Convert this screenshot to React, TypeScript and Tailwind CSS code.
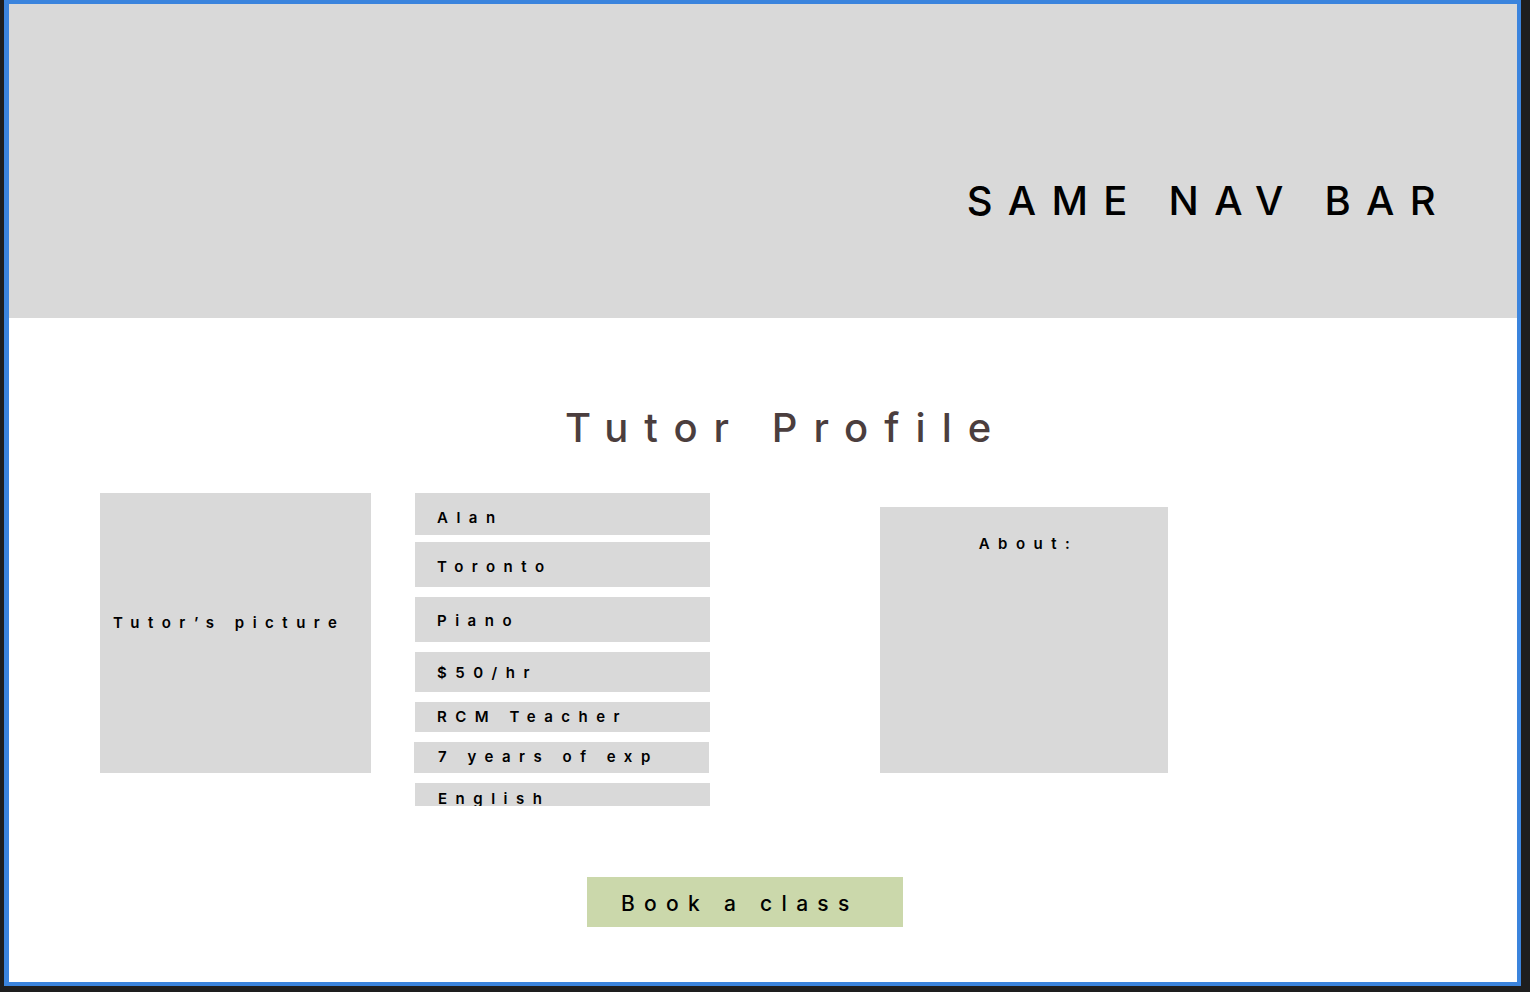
import React from "react";

const font = { fontFamily: "Inter, 'Noto Sans', sans-serif" };

function InfoBox({ text, h, pt, pl = "pl-[22px]", ml = "ml-0", mt }: { text: string; h: string; pt: string; pl?: string; ml?: string; mt: string }) {
  return (
    <div className={`w-[295px] ${h} ${mt} ${ml} bg-[#d9d9d9] ${pt} ${pl} overflow-hidden`}>
      <div className="text-[15px] leading-none font-semibold tracking-[8.5px] text-black whitespace-nowrap">{text}</div>
    </div>
  );
}

export default function App() {
  return (
    <div className="w-[1530px] h-[992px] bg-[#1e1e1e] pl-[4px] pr-[9px] pb-[6px]" style={font}>
      <div className="h-full border-l-[5px] border-t-4 border-r-4 border-b-4 border-[#3b84dd] bg-white flex flex-col">
        <div className="h-[314px] bg-[#d9d9d9] flex justify-end pt-[177px] pr-[66px]">
          <div className="text-[40px] leading-none font-medium tracking-[15.3px] text-black whitespace-nowrap">SAME NAV BAR</div>
        </div>
        <div className="mt-[90px] pl-[556px]">
          <div className="text-[40px] leading-none font-medium tracking-[16px] text-[#4b3e3e] whitespace-nowrap">Tutor Profile</div>
        </div>
        <div className="mt-[45px] flex items-start pl-[91px]">
          <div className="w-[271px] h-[280px] bg-[#d9d9d9] pt-[122px] pl-[13px]">
            <div className="text-[15px] leading-none font-semibold tracking-[8.5px] text-black whitespace-nowrap">Tutor’s picture</div>
          </div>
          <div className="ml-[44px] flex flex-col">
            <InfoBox text="Alan" h="h-[42px]" pt="pt-[17px]" mt="mt-0" />
            <InfoBox text="Toronto" h="h-[45px]" pt="pt-[17px]" mt="mt-[7px]" />
            <InfoBox text="Piano" h="h-[45px]" pt="pt-[16px]" mt="mt-[10px]" />
            <InfoBox text="$50/hr" h="h-[40px]" pt="pt-[13px]" mt="mt-[10px]" />
            <InfoBox text="RCM Teacher" h="h-[30px]" pt="pt-[7px]" mt="mt-[10px]" />
            <InfoBox text="7 years of exp" h="h-[31px]" pt="pt-[7px]" pl="pl-[24px]" ml="-ml-px" mt="mt-[10px]" />
            <InfoBox text="English" h="h-[23px]" pt="pt-[8px]" pl="pl-[23px]" mt="mt-[10px]" />
          </div>
          <div className="ml-[170px] mt-[14px] w-[288px] h-[266px] bg-[#d9d9d9] pt-[29px] pl-[9px] text-center">
            <div className="text-[15px] leading-none font-semibold tracking-[8.5px] text-black whitespace-nowrap">About:</div>
          </div>
        </div>
        <div className="mt-[71px] pl-[578px]">
          <div className="w-[316px] h-[50px] bg-[#cbd8ab] pt-[16px] pl-[34px]">
            <div className="text-[21px] leading-none font-medium tracking-[9.3px] text-black whitespace-nowrap">Book a class</div>
          </div>
        </div>
      </div>
    </div>
  );
}
